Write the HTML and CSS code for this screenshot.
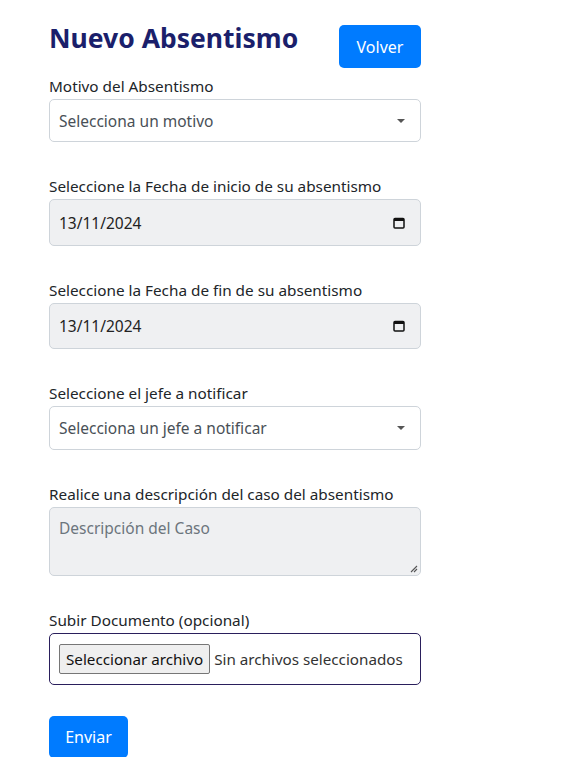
FILE: index.html
```html
<!DOCTYPE html>
<html lang="es">
<head>
<meta charset="utf-8">
<title>Nuevo Absentismo</title>
<link rel="stylesheet" href="styles.css">
</head>
<body>
<main class="form">
  <header class="head">
    <h1 class="title">Nuevo Absentismo</h1>
    <button class="btn btn-volver">Volver</button>
  </header>

  <div class="group first">
    <div class="label">Motivo del Absentismo</div>
    <div class="control select h43">
      <span>Selecciona un motivo</span>
      <span class="caret"></span>
    </div>
  </div>

  <div class="group">
    <div class="label">Seleccione la Fecha de inicio de su absentismo</div>
    <div class="control date h47">
      <span>13/11/2024</span>
      <svg class="cal" width="12" height="12" viewBox="0 0 12 12"><rect x="1" y="1.5" width="10" height="9.5" rx="1" fill="none" stroke="#111" stroke-width="1.5"/><rect x="1" y="1.5" width="10" height="2.5" fill="#111"/></svg>
    </div>
  </div>

  <div class="group">
    <div class="label">Seleccione la Fecha de fin de su absentismo</div>
    <div class="control date h46">
      <span>13/11/2024</span>
      <svg class="cal" width="12" height="12" viewBox="0 0 12 12"><rect x="1" y="1.5" width="10" height="9.5" rx="1" fill="none" stroke="#111" stroke-width="1.5"/><rect x="1" y="1.5" width="10" height="2.5" fill="#111"/></svg>
    </div>
  </div>

  <div class="group">
    <div class="label">Seleccione el jefe a notificar</div>
    <div class="control select h44">
      <span>Selecciona un jefe a notificar</span>
      <span class="caret"></span>
    </div>
  </div>

  <div class="group">
    <div class="label">Realice una descripción del caso del absentismo</div>
    <div class="control textarea">
      <span class="placeholder">Descripción del Caso</span>
      <svg class="grip" width="9" height="9" viewBox="0 0 9 9"><path d="M8 2 L2 8 M8 5 L5 8" stroke="#555" stroke-width="1.1" fill="none"/></svg>
    </div>
  </div>

  <div class="group">
    <div class="label">Subir Documento (opcional)</div>
    <div class="control file">
      <span class="file-btn">Seleccionar archivo</span>
      <span class="file-text">Sin archivos seleccionados</span>
    </div>
  </div>

  <button class="btn btn-enviar">Enviar</button>
</main>
</body>
</html>
```

FILE: styles.css
```css
* { box-sizing: border-box; }
body {
  margin: 0;
  background: #fff;
  font-family: "Noto Sans", "Open Sans", sans-serif;
  color: #212529;
}
.form {
  width: 372px;
  margin-left: 49px;
  padding-top: 19px;
  display: flex;
  flex-direction: column;
}
.head {
  display: flex;
  justify-content: space-between;
  align-items: flex-start;
}
.title {
  margin: 0;
  padding-top: 1px;
  font-size: 26.5px;
  font-weight: 700;
  line-height: 36px;
  color: #1b1f6b;
}
.btn {
  border: none;
  background: #007bff;
  color: #fff;
  font-family: inherit;
  font-size: 16px;
  border-radius: 5px;
  padding: 0;
}
.btn-volver {
  width: 82px;
  height: 43px;
  margin-top: 6px;
}
.group {
  display: flex;
  flex-direction: column;
  margin-top: 32px;
}
.group.first { margin-top: 6px; }
.label {
  font-size: 15.3px;
  line-height: 24px;
  margin-bottom: 1px;
  color: #212529;
}
.control {
  border: 1px solid #ced4da;
  border-radius: 5px;
  display: flex;
  align-items: center;
  font-size: 15.5px;
  color: #495057;
  padding: 0 9px;
}
.h43 { height: 43px; }
.h44 { height: 44px; }
.h46 { height: 46px; }
.h47 { height: 47px; }
.select {
  justify-content: space-between;
  background: #fff;
}
.caret {
  width: 0;
  height: 0;
  border-left: 4px solid transparent;
  border-right: 4px solid transparent;
  border-top: 4px solid #555;
  margin-right: 6px;
}
.date {
  background: #eff0f2;
  justify-content: space-between;
  color: #222;
}
.cal { margin-right: 6px; }
.textarea {
  height: 69px;
  background: #eff0f2;
  align-items: flex-start;
  padding-top: 9px;
  position: relative;
}
.placeholder { color: #6c757d; }
.grip {
  position: absolute;
  right: 2px;
  bottom: 2px;
}
.file {
  height: 52px;
  border: 1.5px solid #2a1f5c;
  border-radius: 5px;
  padding: 0 0 0 9px;
  gap: 4px;
  font-size: 15.2px;
  color: #333;
  white-space: nowrap;
  overflow: hidden;
}
.file-btn {
  background: #efefef;
  border: 1px solid #767676;
  border-radius: 2px;
  padding: 0 6px;
  height: 30px;
  display: flex;
  align-items: center;
  color: #111;
  flex-shrink: 0;
}
.btn-enviar {
  width: 79px;
  height: 42px;
  margin-top: 31px;
  align-self: flex-start;
}
```
